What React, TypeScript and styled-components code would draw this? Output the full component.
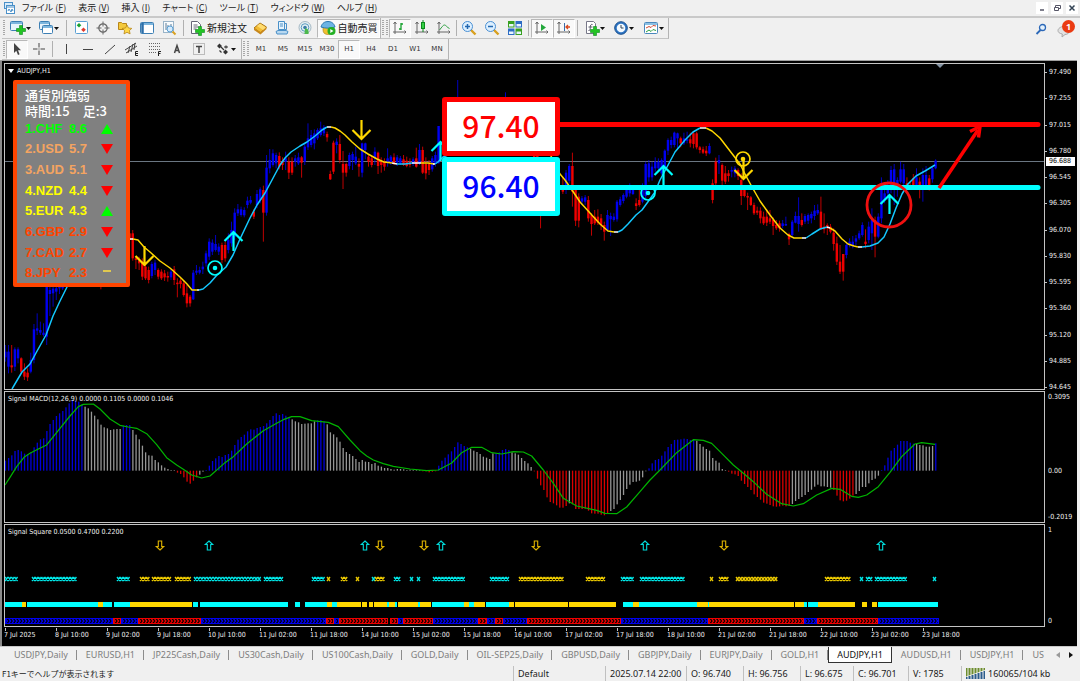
import React from 'react';
import styled, { createGlobalStyle, css } from 'styled-components';

const GlobalStyle = createGlobalStyle`
  *, *::before, *::after { box-sizing: border-box; }
  body { margin: 0; background: #f0f0f0; color: #1a1a1a; font: 9px/12px "Noto Sans", "Noto Sans CJK JP", sans-serif; }
  button { font: inherit; color: inherit; background: none; border: 0; padding: 0; margin: 0; white-space: nowrap; }
  svg { display: block; }
`;

const CYAN = '#00ffff';
const GOLD = '#ffd700';
const CHART_FONT = '"DejaVu Sans Condensed", "DejaVu Sans", sans-serif';

/* ---------- window frame ---------- */

const Window = styled.div`
  display: flex;
  flex-direction: column;
  min-height: 100vh;
  overflow: hidden;
`;

const MenuBar = styled.header`
  display: flex;
  align-items: center;
  height: 18px;
  padding: 0 4px;
  border-bottom: 2px solid #c9c9c9;
`;

const MenuNav = styled.nav`
  display: flex;
  flex: 1;
  gap: 12px;
  padding-left: 6px;
`;

const MenuButton = styled.button`
  height: 16px;
  font-family: "Noto Sans CJK JP", "Noto Sans", sans-serif;
  font-size: 9px;
  line-height: 16px;
  font-feature-settings: "palt";
`;

const WindowButtons = styled.div`
  display: flex;
  gap: 3px;
  margin-right: -2px;
`;

const WindowButton = styled.button`
  display: grid;
  place-items: center;
  width: 12px;
  height: 12px;
  background: #fff;
`;

/* ---------- toolbars ---------- */

const ToolbarRow = styled.div`
  display: flex;
  align-items: stretch;
  height: 21px;
  padding-left: 2px;
  justify-content: space-between;
`;

const Toolbar = styled.div`
  display: flex;
  align-items: center;
  border-right: 1px solid #b4b4b4;
  border-bottom: 1px solid #c4c4c4;
`;

const Group = styled.div`
  display: flex;
`;

const Grip = styled.span`
  width: 2px;
  height: 16px;
  margin: 0 1px 0 1px;
  background: repeating-linear-gradient(#a8a8a8 0 1px, #f0f0f0 1px 2px);
`;

const Divider = styled.span<{ $gap?: number }>`
  width: 1px;
  height: 16px;
  margin: 0 ${(p) => p.$gap ?? 2}px;
  background: #b0b0b0;
`;

const ToolButton = styled.button<{ $pressed?: boolean; $w?: number }>`
  display: flex;
  align-items: center;
  justify-content: center;
  flex: none;
  width: ${(p) => p.$w ?? 22}px;
  height: 19px;
  ${(p) => p.$pressed && css`
    background: #f9f9f9;
    border: 1px solid #fff;
    border-top-color: #b8b8b8;
    border-left-color: #b8b8b8;
  `}
`;

const WideButton = styled(ToolButton)`
  gap: 2px;
  font-family: "Noto Sans CJK JP", sans-serif;
  font-size: 10px;
  line-height: 18px;
`;

const Timeframe = styled(ToolButton)`
  font-family: "DejaVu Sans", sans-serif;
  font-size: 7px;
  color: #333;
`;

const Utilities = styled.div`
  display: flex;
  align-items: center;
  gap: 10px;
  padding-right: 5px;
`;

const ChatButton = styled.button`
  position: relative;
  width: 18px;
  height: 18px;
`;

const Badge = styled.span`
  position: absolute;
  top: 0;
  right: 0;
  width: 13px;
  height: 13px;
  border-radius: 50%;
  background: #ea3a12;
  color: #fff;
  font-size: 9px;
  line-height: 13px;
  font-weight: 700;
  text-align: center;
`;

/* ---------- chart ---------- */

const ChartWindow = styled.main`
  display: flex;
  flex-direction: column;
  flex: 1;
  margin-right: 3px;
  padding: 2px 0 1px 4px;
  background: #000;
  border-top: 1px solid #a0a0a0;
  border-bottom: 1px solid #c8c8c8;
  color: #f0f0f0;
  font: 7px/8px ${CHART_FONT};
  box-shadow: inset 2px 0 0 #8a8a8a;
`;

const PanelRow = styled.section<{ $h: number; $grow?: boolean }>`
  display: flex;
  flex: ${(p) => (p.$grow ? 1 : 0)} 0 ${(p) => p.$h}px;
`;

const Plot = styled.div`
  position: relative;
  flex: 1;
  min-width: 0;
  border: 1px solid #c4c4c4;
  overflow: hidden;
  margin-bottom: 1px;
`;

const Canvas = styled.svg`
  position: absolute;
  inset: 0;
  width: 100%;
  height: 100%;
`;

const PlotTitle = styled.h2`
  position: relative;
  display: flex;
  align-items: center;
  gap: 3px;
  margin: 3px 0 0 3px;
  font: inherit;
  line-height: 8px;
  white-space: pre;
`;

const Axis = styled.div`
  position: relative;
  display: flex;
  flex-direction: column;
  justify-content: space-between;
  width: 32px;
  padding: 5px 0 0 4px;
`;

const ScaleAxis = styled(Axis)`
  padding: 2px 0 3px 3px;
`;

const PriceLabel = styled.span`
  position: relative;
  line-height: 8px;
  &::before {
    content: "";
    position: absolute;
    left: -4px;
    top: 4px;
    width: 2px;
    height: 1px;
    background: #c4c4c4;
  }
`;

const AxisLabel = styled.span<{ $share?: number }>`
  flex: ${(p) => p.$share ?? 0} 0 auto;
  ${(p) => p.$share && css`flex-basis: 0;`}
`;

const CurrentPrice = styled.span`
  position: absolute;
  top: 94px;
  left: 1px;
  width: 29px;
  padding-left: 3px;
  background: #fff;
  color: #000;
  line-height: 9px;
`;

const TimeAxis = styled.div`
  display: flex;
  height: 17px;
  overflow: hidden;
`;

const TimeLabel = styled.span`
  flex: none;
  width: 51px;
  padding-top: 3px;
  white-space: nowrap;
  background: linear-gradient(#c4c4c4, #c4c4c4) 1px 0 / 1px 3px no-repeat;
`;

const Strength = styled.aside`
  position: absolute;
  left: 8px;
  top: 16px;
  width: 117px;
  height: 207px;
  padding: 3px 8px 0;
  border: 4px solid #ff4500;
  border-radius: 2px;
  background: #808080;
  color: #fff;
`;

const StrengthHead = styled.p`
  display: flex;
  gap: 13px;
  margin: 0;
  font: 500 13px/16px "Noto Sans CJK JP", sans-serif;
`;

const StrengthTable = styled.table`
  border-collapse: collapse;
  margin-top: -1px;
  font: 700 13px/21px "Liberation Sans", sans-serif;
  td { padding: 0; height: 20px; line-height: 20px; }
  tr:nth-child(3n) td, tr:nth-child(3n + 1) td { height: 21px; line-height: 21px; }
`;

const StrengthCell = styled.td<{ $ink: string; $w: number }>`
  width: ${(p) => p.$w}px;
  color: ${(p) => p.$ink};
`;

const Level = styled.div<{ $line: string; $ink: string; $top: number }>`
  position: absolute;
  left: 437px;
  top: ${(p) => p.$top}px;
  width: 118px;
  height: 59px;
  border: 5px solid ${(p) => p.$line};
  border-radius: 3px;
  background: #fff;
  color: ${(p) => p.$ink};
  font: 500 30px/46px "Noto Sans CJK JP", sans-serif;
  text-align: center;
`;

/* ---------- tabs and status ---------- */

const TabBar = styled.nav`
  display: flex;
  height: 17px;
  padding-left: 5px;
  color: #7d7d7d;
`;

const TabStrip = styled.div`
  display: flex;
  flex: 1;
  min-width: 0;
  overflow: hidden;
`;

const Tab = styled.button<{ $active?: boolean }>`
  position: relative;
  flex: none;
  height: 16px;
  padding: 0 9px;
  line-height: 14px;
  &::after {
    content: "";
    position: absolute;
    right: 0;
    top: 3px;
    width: 1px;
    height: 10px;
    background: #8c8c8c;
  }
  &:last-child::after { display: none; }
  &:last-child { padding-right: 0; }
  ${(p) => p.$active && css`
    padding: 0 8px;
    color: #111;
    background: #fff;
    border: 1px solid #333;
    border-top: 0;
    &::after { display: none; }
  `}
`;

const TabArrows = styled.div`
  display: flex;
  gap: 9px;
  padding: 0 7px 2px 1px;
  align-items: center;
`;

const StatusBar = styled.footer`
  display: flex;
  align-items: center;
  height: 19px;
  padding-left: 2px;
  font-family: "Noto Sans", "Noto Sans CJK JP", sans-serif;
`;

const StatusHint = styled.span`
  flex: 1;
  white-space: nowrap;
  font-family: "Noto Sans CJK JP", sans-serif;
  font-size: 8px;
`;

const StatusCell = styled.span<{ $w: number }>`
  display: flex;
  align-items: center;
  gap: 3px;
  width: ${(p) => p.$w}px;
  height: 15px;
  padding-left: 4px;
  border-left: 1px solid #c0c0c0;
  white-space: nowrap;
`;

/* ---------- icons ---------- */

const Icon = ({ children, w = 16, h = 16 }: { children: React.ReactNode; w?: number; h?: number }) => (
  <svg width={w} height={h} viewBox={`0 0 ${w} ${h}`} fill="none" aria-hidden="true">{children}</svg>
);

const Caret = () => <Icon w={5} h={3}><path d="M0 0h5L2.500 3z" fill="#111" /></Icon>;
const Plus = ({ x = 6, y = 6 }) => (
  <path transform={`translate(${x} ${y})`} d="M3 0h3v3h3v3H6v3H3V6H0V3h3z" fill="#22c422" stroke="#0a8a1c" strokeWidth=".6" />
);
const Axes = () => <path d="M3 2v12M1 12h13M1.500 4 3 2l1.500 2M12.500 10.500 14 12l-1.500 1.500" stroke="#666" />;

const icons: Record<string, React.ReactNode> = {
  app: <><rect x=".5" y=".5" width="8" height="6" fill="#d9ecfa" stroke="#4a90c8" /><rect x="2.500" y="3.500" width="8" height="8" fill="#fff" stroke="#4a90c8" /><path d="M3 5h7M4 9l1-2 2 3 1-3 1 2" stroke="#4a90c8" /></>,
  newChart: <><rect x=".5" y="1.500" width="12" height="9" rx="1" fill="#e8f4fc" stroke="#3c7fb4" /><path d="M1 3h11" stroke="#7db6de" strokeWidth="2" /><Plus x={6.500} y={5.500} /></>,
  profiles: <><rect x="1.500" y="1.500" width="10" height="8" rx="1" fill="#e8f4fc" stroke="#3c7fb4" /><path d="M2 3h9" stroke="#7db6de" strokeWidth="2" /><rect x="4.500" y="5.500" width="10" height="8" rx="1" fill="#fff" stroke="#3c7fb4" /><path d="M5 7h9" stroke="#7db6de" strokeWidth="2" /></>,
  market: <><rect x="2.500" y="1.500" width="12" height="12" rx="1" fill="#fff" stroke="#5aa0d4" /><path d="m6 3 2.300 2.300L6 7.600 3.700 5.300z" fill="#18a030" /><path d="m10.500 7.500 2.300 2.300-2.300 2.300-2.300-2.300z" fill="#e03a2c" /></>,
  dataWindow: <><circle cx="8" cy="8" r="4.200" stroke="#666" strokeWidth="1.200" /><path d="M8 1.500v5M8 9.500v5M1.500 8h5M9.500 8h5" stroke="#666" /></>,
  navigator: <><path d="M1.500 2.500h3l1 1h4v6h-8z" fill="#f4c93c" stroke="#b88618" /><path d="m10 5 1.500 3 3.300.4-2.400 2.200.7 3.300-3.100-1.600L7 13.900l.6-3.300-2.400-2.200 3.300-.4z" fill="#ffd848" stroke="#b88618" strokeWidth=".8" /></>,
  terminal: <><rect x="1.500" y="2.500" width="13" height="11" rx="1" fill="#fff" stroke="#3c7fb4" /><path d="M2 4h12" stroke="#7db6de" strokeWidth="2" /><path d="M3.500 3v10" stroke="#2d6ea8" strokeWidth="2.500" /></>,
  tester: <><rect x="2.500" y="1.500" width="10" height="11" fill="#f8fbfd" stroke="#9ab4c8" /><path d="M5 3v7M7 5v5M10 4v5" stroke="#5c7c98" /><circle cx="9" cy="9" r="3" fill="#d4eafc" stroke="#5aa0d4" /><path d="m11.500 11.500 3 3" stroke="#d8a020" strokeWidth="2" /></>,
  order: <><path d="M2.500 1.500h6l3 3v9h-9z" fill="#fff" stroke="#667" /><path d="M4.500 5h4M4.500 7h5M4.500 9h3" stroke="#667" /><Plus x={6.500} y={6.500} /></>,
  editor: <><path d="m2 8 6-5 6.500 4-6 6z" fill="#f2bc34" stroke="#a87414" /><path d="m2 8 6.500 4 6-5v2l-6 5.500L2 10z" fill="#c8881c" /><path d="M8 3.500 5 6l6 4 3-2.500z" fill="#ffdc70" /></>,
  metaquotes: <><path d="M4.500 1.500h6v8h-6z" fill="#e6f3fc" stroke="#4a90c8" /><path d="M10.500 3.500h2v6h-2M6 4h3M6 6h3" stroke="#4a90c8" /><path d="m2 11.500 2-1h8l2 1-1 2.500H3z" fill="#b8d8f0" stroke="#4a90c8" /></>,
  signal: <><circle cx="8" cy="7.500" r="6" stroke="#a4b8c4" fill="#e4eef2" /><circle cx="8" cy="7.500" r="3.800" stroke="#5a9cc0" /><circle cx="8" cy="7.500" r="1.800" fill="#3a7ca8" /><path d="M8 8.500c3-.5 4 2 3.500 5.500H7.500z" fill="#4cb84c" /></>,
  auto: <><path d="M3 7h10v3c0 3-2 4.500-5 4.500S3 13 3 10z" fill="#f0c030" stroke="#a88018" strokeWidth=".6" /><path d="M1 7c1-4 4-5.500 7-5.500S14 3 15 7c-4 1.500-10 1.500-14 0z" fill="#6cb4e4" stroke="#2d78b0" /><circle cx="11.500" cy="11" r="4" fill="#24b024" /><path d="m10.300 9 3.200 2-3.200 2z" fill="#fff" /></>,
  bars: <><Axes /><path d="M9 3v7M9 4h2M7 9h2" stroke="#14a02c" strokeWidth="1.300" /></>,
  candles: <><Axes /><path d="M9 0v12" stroke="#0a8a1c" /><rect x="7.500" y="2.500" width="3" height="6" fill="#34d044" stroke="#0a8a1c" /></>,
  line: <><Axes /><path d="M3.500 10C6 7 7 5 8.500 5s2.500 2.500 5 3.500" stroke="#2ca040" /></>,
  zoomIn: <><path d="m9.500 9.500 5 5" stroke="#d8a020" strokeWidth="2.400" /><circle cx="6.500" cy="6.500" r="5" fill="#dcefff" stroke="#4a90d4" /><path d="M4 6.500h5M6.500 4v5" stroke="#2468b0" strokeWidth="1.500" /></>,
  zoomOut: <><path d="m9.500 9.500 5 5" stroke="#d8a020" strokeWidth="2.400" /><circle cx="6.500" cy="6.500" r="5" fill="#dcefff" stroke="#4a90d4" /><path d="M4 6.500h5" stroke="#2468b0" strokeWidth="1.500" /></>,
  tile: <><path d="M1 1h6.500v6.500H1zM8.500 8.500H15V15H8.500z" fill="#38a020" /><path d="M8.500 1H15v6.500H8.500zM1 8.500h6.500V15H1z" fill="#2c6cc4" /><path d="M2 4h4.500v2.500H2zM9.500 4H14v2.500H9.500zM2 11.500h4.500V14H2zM9.500 11.500H14V14H9.500z" fill="#e8f4ff" /></>,
  scroll: <><Axes /><path d="m7 4 5 3.500L7 11z" fill="#24a83c" /></>,
  shift: <><Axes /><path d="M8.500 3v8" stroke="#3a6ca8" /><path d="M14 7H10.500M12 5l-2 2 2 2" stroke="#d84820" strokeWidth="1.300" /></>,
  indicators: <><path d="M2.500 1.500h7l2 2v10h-9z" fill="#fff" stroke="#778" /><path d="M8.500 4.500c-2-.5-2 1-2.200 3-.2 2-.3 3.500-1.800 3M4.500 7h4" stroke="#556" /><Plus x={6.500} y={6.500} /></>,
  clock: <><circle cx="8" cy="8" r="6.300" fill="#2c74c4" stroke="#1c508c" /><circle cx="8" cy="8" r="4.300" fill="#f4faff" /><path d="M8 5v3h2.500" stroke="#345" /></>,
  template: <><rect x="1.500" y="2.500" width="13" height="11" rx="1" fill="#fff" stroke="#4a88bc" /><path d="M2 4h12" stroke="#8cc0e4" strokeWidth="2" /><path d="m3 8 3-1.500 2 1 2-2 3 .5" stroke="#d04830" /><path d="m3 12 3-2 2 1.500 2-2 3 1" stroke="#2ca040" /></>,
  pointer: <path d="M5 2v10l2.300-2.200L9 14l1.600-.8L9 9.300h3z" fill="#444" />,
  cross: <path d="M8 2v4.500M8 9.500V14M2 8h4.500M9.500 8H14M8 7.500v1" stroke="#444" />,
  vline: <path d="M8.500 3v10" stroke="#444" />,
  hline: <path d="M3 8.500h10" stroke="#444" />,
  trend: <path d="M3 13 13 4" stroke="#444" />,
  channel: <><path d="m1 9 11-7M2 12l11-7M4 12l2-7M7 11l2-8M10 9l1-7" stroke="#444" /><path d="M14 10.500h-2.500v4H14M11.500 12.500H14" stroke="#222" /></>,
  fibo: <><path d="M2 2.500h12M2 5.500h12M2 8.500h12M2 11.500h8" stroke="#666" strokeDasharray="1 1" /><path d="M14 10.500h-2.500V15M11.500 12.500h2" stroke="#222" /></>,
  textTool: <path d="M5.500 12 8 4.500l2.500 7.500M6.500 9.500h3" stroke="#444" strokeWidth="1.500" />,
  labelTool: <><rect x="2.500" y="2.500" width="11" height="11" stroke="#888" strokeDasharray="1 1" /><path d="M5 5.500h6M8 5v7" stroke="#444" strokeWidth="1.500" /></>,
  arrows: <><path d="m2 5 2.500-2.500L7 5 4.500 7.500zM8 11l2.500-2.500L13 11l-2.500 2.500z" fill="#333" /><path d="m4.500 9.500 2 2M6 6l3 3M9 6h4M11 4.500v3" stroke="#333" strokeWidth="1.200" /></>,
};

const Tool = ({ name, label, pressed, caret, w }: { name: string; label: string; pressed?: boolean; caret?: boolean; w?: number }) => (
  <ToolButton type="button" aria-label={label} $pressed={pressed} $w={w ?? (caret ? 30 : 22)}>
    <Icon>{icons[name]}</Icon>{caret && <Caret />}
  </ToolButton>
);

/* ---------- chart data: positions are in thirds of a pixel ---------- */

const PITCH = 3.186;
const barX = (i: number) => 5.300 + i * PITCH;

type Segment = { start: number; y: number; bars: string };
/* each bar: direction, high, low, body top, body bottom */
const segments: Segment[] = [
  { start: 0, y: 70, bars: 'b825,875,845,862 b825,910,845,890 r825,908,886,892 b832,903,838,890 b832,880,838,865 r862,910,865,905 r880,930,905,920 r895,933,908,922 b848,910,870,905 b762,880,778,870 b730,795,775,782 b755,795,780,788 b760,800,788,795 b640,825,650,800 b650,738,660,672 b645,710,656,670 b640,690,655,665 b640,672,645,655 b640,660,640,655' },
  { start: 30, y: 70, bars: 'r630,658,630,640' },
  { start: 39, y: 70, bars: 'r475,520,490,510 r480,572,490,565 r560,597,565,570 r560,600,572,580 r565,630,575,620 r575,630,590,625 r590,640,600,630 b575,625,582,618 b570,615,578,600 r595,628,600,620 r598,630,605,625 r600,633,610,622 r605,635,618,622 b597,630,605,622 r588,645,598,630 r625,682,638,642 r625,655,632,642 r630,680,640,675 r645,712,670,700 r675,710,680,700 b600,690,608,688 b585,615,602,608 b590,613,600,608 b575,612,590,598 b542,590,550,580 b505,570,515,560 b508,555,518,545 b495,545,522,540 b520,555,530,545 r518,580,525,570 r515,575,525,565 b490,550,510,540 b455,530,480,520 b415,510,428,500 b402,438,418,430 b410,440,418,435 b412,442,420,436 b380,415,392,405 b378,403,390,398 r418,447,425,440 b360,415,372,405 b352,400,358,390 r347,515,360,428 b255,437,293,428 b237,310,270,295 b238,290,250,285 b248,295,255,280 r247,298,258,290' },
  { start: 87, y: 70, bars: 'r262,300,275,285 b245,300,265,275 r262,327,275,308 r262,315,275,308 b255,290,265,275 b248,285,262,280 r258,323,262,278 b220,285,230,275 b160,240,205,232 b180,232,195,225 b178,238,190,220 b175,210,180,205 b155,200,175,195 b165,198,172,190 r185,215,192,202 r302,330,312,328 r212,312,218,305 b205,250,215,225 r195,280,222,270 r243,357,282,308 r278,320,282,308 b248,298,255,288 b245,300,252,270 b230,285,260,280 r265,320,282,290 b218,322,220,308 b218,268,220,240 r255,290,260,275 r258,292,265,285 b232,285,245,265 r245,312,248,288 r262,308,275,285 r265,302,275,290 b235,290,265,275 b255,285,260,278 r250,285,262,280 b255,288,262,278 b258,285,265,280 r255,288,268,285 r260,292,272,288 r265,292,275,285 b262,288,268,282 r233,293,265,290 b222,285,240,280 r230,312,240,308 r262,328,282,310 r270,315,282,300 b258,305,265,298 b245,290,255,282 b168,280,168,280' },
  { start: 142, y: 70, bars: 'b30,120,100,120' },
  { start: 157, y: 70, bars: 'b67,120,100,120' },
  { start: 166, y: 70, bars: 'r240,270,255,265 r250,275,255,270 r300,475,300,400' },
  { start: 175, y: 90, bars: 'r260,312,290,305 b240,312,248,300 b222,280,228,272 r188,350,228,305 r290,408,300,392 r310,412,320,392 b318,345,325,335 b315,345,322,335 r318,395,330,385 r370,437,375,402 r360,405,380,400 r358,405,380,398 r372,420,385,405 r395,452,405,425 b360,425,375,420 b368,438,378,388 b370,395,380,390 b330,395,335,388 b320,350,328,345 b310,340,315,333 b285,325,298,320 b280,320,295,310 b290,315,300,312 r325,360,340,348 r300,350,330,345 b280,340,290,335 b215,325,222,318 b210,275,220,262 b215,272,230,262 b202,245,215,235 b205,245,215,235 b205,255,210,250 b178,235,182,230 b145,195,150,182 b140,175,150,165 b125,172,128,165 b128,178,130,145 r140,172,145,160 b128,165,145,160 b125,160,148,152 r128,172,148,160 r125,175,130,162 r125,178,130,172 r168,190,172,180 r170,192,178,188 r168,198,182,190 b160,193,168,190 r268,340,280,330 r203,285,215,280 b195,252,210,220 r220,290,225,272 r228,282,250,275 r240,275,250,258 b230,262,240,245 b228,262,235,250 r235,270,240,258 r250,345,270,318 r285,322,300,318 r308,360,318,322 r318,348,322,345 r338,375,345,370 r350,375,362,368 r352,400,362,385 r365,405,380,400 r358,408,380,398 r360,402,385,395 r382,435,390,408 r390,420,405,415 r392,425,400,415 b390,415,400,408 b380,408,402,406 r428,465,432,448 b390,438,395,435 b365,400,378,398 b322,425,378,402 r370,410,390,405 b372,402,378,395 b370,402,375,392 b365,400,372,385 b345,390,362,378 b343,375,360,370 r320,420,365,415 r370,430,410,418 r400,435,405,415 r402,430,410,425 r415,482,428,462 r440,525,460,515 r465,552,515,545' },
  { start: 263, y: 90, bars: 'r492,572,492,545 b455,505,465,495 b445,472,455,465 b438,475,455,468 b435,465,445,455 b422,450,430,445 b397,440,405,435 r418,475,455,462 b395,460,410,450 b355,480,390,430 r380,502,390,440 b370,445,380,440 b262,400,300,385 b290,340,310,330 b270,330,295,310 b228,310,240,300 b222,345,238,290 b262,320,270,290 b215,280,238,275 b222,290,238,280 r262,300,280,290 r275,300,285,292 r252,300,265,290 b235,295,262,288 r262,325,275,295 b235,335,255,290 b228,295,255,285 r255,302,265,298 b228,278,235,268 b208,238,212,235' },
];

const maLines: [string, string][] = [
  [CYAN, '12,389 22,372 30,364 36,353 46,335 53,316 60,301 67,287 80,262 100,242 129,239'],
  [GOLD, '133,239 138,240 144,247 150,252 160,261 170,268 180,277 187,284 192,290 197,290'],
  [CYAN, '199,290 203,289 210,283 217,275 226,267 233,255 240,239 250,218 257,205 265,193 272,180 280,165 285,158 291,152 300,146 307,142 315,136 322,130 327,127'],
  [GOLD, '331,127 335,128 340,131 345,135 352,142 360,149 368,154 377,159 384,162 392,163'],
  [CYAN, '397,164 405,164 412,163'],
  [GOLD, '421,163 428,163 434,164'],
  [CYAN, '435,164 438,162 443,157 460,150'],
  [GOLD, '545,150 551,156 560,174 565,180 572,190 580,202 590,213 600,224 608,231 614,232'],
  [CYAN, '618,232 622,230 628,224 636,215 642,210 650,199 655,192 660,180 667,167 675,152 685,140 693,132 700,128'],
  [GOLD, '706,128 712,131 720,138 730,151 740,164 746,176 752,187 760,201 770,215 780,228 788,235 794,238 802,238'],
  [CYAN, '806,238 812,234 820,229 827,227'],
  [GOLD, '830,228 835,231 842,239 848,244 854,246 858,247'],
  [CYAN, '862,247 870,246 878,243 884,237 890,224 896,208 902,194 908,184 916,176 925,171 935,165'],
];
const maJoints = '129,239 133,239 M197,290 199,290 M327,127 331,127 M392,163 397,164 M412,163 421,163 M433,164 435,164 M614,232 618,232 M700,128 706,128 M802,238 806,238 M827,227 830,228 M858,247 862,247';

const MACD_ZERO = 242;
const macd = [
  212, 204, 196, 183, 180, 184, 191, 192, 187, 172, 158, 148, 145, 123, 102, 90, 78, 70, 63, 52, 40, 30, 32, 35, 44, 50, 55, 65, 77, 88, 104, 112, 115, 120, 118, 117, 117, 107, 105, 105,
  120, 134, 148, 167, 187, 196, 197, 210, 217, 226, 233, 237, 240, 241, 248, 252, 262, 275, 281, 272, 262, 254, 245, 240, 227, 213, 205, 198, 201, 195, 192, 182, 165, 149, 141, 134, 124, 118, 119, 114,
  111, 108, 100, 90, 78, 70, 75, 72, 77, 82, 88, 94, 97, 102, 101, 100, 100, 94, 91, 90, 94, 103, 127, 133, 142, 155, 174, 186, 192, 198, 207, 216, 210, 215, 216, 222, 219, 227, 230, 234,
  234, 237, 239, 237, 237, 238, 240, 239, 240, 241, 241, 243, 243, 247, 245, 242, 227, 212, 203, 193, 184, 171, 157, 162, 168, 172, 176, 182, 186, 192, 200, 203, 207, 190, 190, 187, 180, 177, 180, 187,
  190, 194, 204, 213, 220, 231, 244, 266, 286, 300, 322, 336, 340, 346, 353, 353, 348, 340, 343, 357, 357, 357, 356, 362, 370, 371, 371, 374, 376, 372, 363, 357, 343, 330, 315, 297, 284, 276, 275, 272,
  262, 242, 235, 220, 210, 207, 197, 184, 171, 162, 150, 149, 148, 146, 147, 150, 148, 152, 162, 170, 177, 182, 204, 212, 218, 237, 241, 245, 251, 253, 258, 272, 282, 291, 300, 313, 321, 329, 338, 341,
  345, 349, 350, 349, 347, 349, 348, 342, 333, 327, 321, 315, 306, 299, 290, 284, 289, 289, 291, 293, 300, 317, 331, 334, 332, 326, 317, 312, 303, 291, 291, 280, 270, 266, 257, 240, 226, 203, 182, 174,
  164, 153, 153, 153, 158, 161, 162, 165, 166, 170, 170, 168, 160,
];
const macdSpans: [number, string][] = [
  [25, 'b'], [37, 'g'], [40, 'b'], [54, 'g'], [61, 'r'], [63, 'g'], [90, 'b'], [98, 'g'], [101, 'b'], [131, 'g'], [136, 'r'], [146, 'b'], [154, 'g'], [159, 'b'],
  [166, 'g'], [177, 'r'], [178, 'g'], [190, 'r'], [202, 'g'], [217, 'b'], [227, 'g'], [247, 'r'], [260, 'g'], [267, 'r'], [275, 'g'], [286, 'b'], [292, 'g'], [999, 'b'],
];
const macdInk: Record<string, string> = { b: '#0000d8', g: '#969696', r: '#dc0000' };
const macdColor = (i: number) => macdInk[macdSpans.find(([end]) => i < end)![1]];

const macdSignal = '15,285 30,262 50,230 72,202 90,190 115,177 140,165 160,140 180,115 210,78 235,50 250,43 280,42 300,57 330,87 360,106 385,111 410,115 440,131 470,164 500,203 530,225 550,238 575,255 605,264 630,258 655,236 675,218 700,200 740,162 790,122 830,100 850,89 875,80 900,80 935,92 985,97 1015,110 1050,150 1080,182 1100,198 1120,210 1150,221 1180,229 1230,237 1280,242 1315,240 1355,219 1385,188 1415,172 1445,172 1475,188 1505,192 1540,185 1570,186 1595,198 1630,240 1660,280 1690,325 1730,348 1790,361 1815,370 1850,371 1880,351 1920,305 1950,270 1980,240 2030,188 2080,149 2110,151 2135,160 2160,185 2200,225 2230,250 2260,275 2300,313 2345,341 2380,348 2410,341 2450,315 2495,295 2520,298 2555,319 2575,322 2600,315 2635,290 2670,247 2705,200 2745,162 2765,158 2805,163';

type Run = [number, number, 'c' | 'y' | 'b' | 'r'];
const crossRuns: Run[] = [
  [5, 19, 'c'], [32, 76, 'c'], [117, 130, 'c'], [140, 150, 'y'], [152, 171, 'y'], [175, 191, 'y'], [194, 261, 'c'], [264, 283, 'c'], [312, 325, 'c'], [327, 331, 'y'], [341, 347, 'y'],
  [356, 360, 'y'], [372, 375, 'c'], [375, 385, 'y'], [394, 401, 'c'], [410, 414, 'c'], [417, 420, 'c'], [433, 465, 'c'], [490, 510, 'c'], [519, 564, 'y'], [586, 605, 'y'], [621, 634, 'c'],
  [640, 685, 'c'], [710, 713, 'y'], [719, 729, 'y'], [736, 777, 'y'], [825, 851, 'y'], [860, 863, 'c'], [866, 873, 'c'], [875, 908, 'c'], [933, 936, 'c'],
];
const bandRuns: Run[] = [
  [5, 22, 'c'], [22, 26, 'y'], [27, 98, 'c'], [98, 103, 'y'], [103, 112, 'c'], [114, 130, 'c'], [130, 192, 'y'], [193, 198, 'c'], [200, 288, 'c'], [295, 300, 'c'], [305, 327, 'c'], [327, 332, 'y'],
  [332, 337, 'c'], [337, 361, 'y'], [362, 367, 'y'], [369, 373, 'y'], [374, 387, 'y'], [387, 389, 'c'], [389, 395, 'y'], [395, 397, 'c'], [398, 418, 'y'], [418, 420, 'c'], [420, 431, 'y'],
  [432, 464, 'c'], [464, 469, 'y'], [469, 474, 'c'], [474, 485, 'y'], [486, 509, 'c'], [509, 514, 'y'], [515, 568, 'y'], [569, 616, 'y'], [623, 633, 'c'], [633, 639, 'y'], [639, 697, 'c'],
  [697, 708, 'y'], [708, 709, 'c'], [709, 794, 'y'], [795, 804, 'y'], [804, 807, 'c'], [808, 818, 'c'], [818, 855, 'y'], [862, 867, 'y'], [872, 877, 'y'], [878, 938, 'c'],
];
const squareRuns: Run[] = [
  [5, 113, 'b'], [113, 121, 'r'], [121, 138, 'b'], [138, 201, 'r'], [201, 326, 'b'], [326, 334, 'r'], [334, 339, 'b'], [339, 388, 'r'], [390, 398, 'r'], [398, 403, 'b'], [403, 433, 'r'],
  [433, 478, 'b'], [478, 487, 'r'], [487, 495, 'b'], [495, 503, 'r'], [503, 527, 'b'], [527, 621, 'r'], [621, 708, 'b'], [708, 804, 'r'], [804, 817, 'b'], [817, 878, 'r'], [878, 939, 'b'],
];
const runInk = { c: CYAN, y: GOLD, b: '#0000f0', r: '#f00000' };
const signalArrows: [number, 1 | -1][] = [[160, -1], [209, 1], [365, 1], [380, -1], [424, -1], [441, 1], [536, -1], [645, 1], [724, -1], [881, 1]];
const tradeArrows: [number, number, 1 | -1][] = [[144, 256, -1], [233, 241, 1], [361, 130, -1], [440, 151, 1], [663, 175, 1], [743, 170, -1], [889, 204, 1]];
const rings: [number, number, string][] = [[215, 268, CYAN], [648, 193, CYAN], [743, 159, GOLD]];

const PriceCanvas = () => (
  <Canvas role="img" aria-label="AUDJPY H1 candlestick chart">
    <g transform="translate(-5 -64)">
      <path d="M5 161.500H2000" stroke="#6a7682" />
      {segments.flatMap((s) => s.bars.split(' ').map((bar, k) => {
        const [hi, lo, top, bottom] = bar.slice(1).split(',').map((v) => s.y + Number(v) / 3);
        const x = barX(s.start + k);
        const ink = bar[0] === 'b' ? '#0000f0' : '#f00000';
        return (
          <g key={`${s.start}-${k}`}>
            <path d={`M${x} ${hi}V${lo}`} stroke={ink} strokeWidth=".8" />
            <rect x={x - 1.200} y={top} width="2.400" height={Math.max(1.500, bottom - top)} fill={ink} />
          </g>
        );
      }))}
      <g fill="none" strokeWidth="1.500" strokeLinejoin="round">
        {maLines.map(([ink, pts]) => <polyline key={pts} points={pts} stroke={ink === CYAN ? '#14c8ff' : ink} />)}
        <path d={`M${maJoints}`} stroke="#fff" />
      </g>
      {tradeArrows.map(([x, y, dir]) => (
        <path key={x} transform={`translate(${x}.500 ${y}) scale(1 ${dir})`} d="M0 10V-8M-9 0 0-9 9 0" fill="none" stroke={dir > 0 ? CYAN : GOLD} strokeWidth="2.200" />
      ))}
      {rings.map(([x, y, ink]) => (
        <g key={x}><circle cx={x} cy={y} r="7" fill="none" stroke={ink} strokeWidth="1.700" /><circle cx={x} cy={y} r="2.300" fill={ink} /></g>
      ))}
      <g strokeWidth="5" strokeLinecap="round">
        <path d="M556 124.500H1038" stroke="#ff0000" />
        <path d="M556 187.500H1038" stroke={CYAN} />
      </g>
      <g fill="none" stroke="#ff0000" strokeWidth="3.500">
        <path d="m939 188 39-58" />
        <path d="M970 131.500 980 126.500l-1.500 11" />
        <circle cx="889" cy="205" r="22" stroke="#f01010" strokeWidth="2.800" />
      </g>
      <path d="M936 64h8l-4 4z" fill="#8494a4" />
    </g>
  </Canvas>
);

const MacdCanvas = () => (
  <Canvas role="img" aria-label="Signal MACD histogram">
    <g transform="translate(-5 -2)">
      {macd.map((v, i) => (
        <rect key={i} x={barX(i) - 0.500} y={Math.min(v, MACD_ZERO) / 3} width="1.300" height={Math.max(0.600, Math.abs(v - MACD_ZERO) / 3)} fill={macdColor(i)} />
      ))}
      <polyline transform="scale(.33333)" points={macdSignal} fill="none" stroke="#00b400" strokeWidth="3.600" strokeLinejoin="round" />
    </g>
  </Canvas>
);

const steps = ([from, to]: Run) => {
  const n = Math.max(1, Math.round((to - from) / PITCH));
  return Array.from({ length: n }, (_, k) => from + 1.500 + k * PITCH);
};

const SquareCanvas = () => (
  <Canvas role="img" aria-label="Signal Square bands">
    <g transform="translate(-5 -525)">
      {signalArrows.map(([x, dir]) => (
        <path key={x} transform={`translate(${x} 545.500) scale(1 ${dir})`} d="M0-4.500 3.700-1H1.700V4.500H-1.700V-1H-3.700z" fill="none" stroke={dir > 0 ? '#00dcdc' : '#e0b400'} strokeWidth="1.100" />
      ))}
      {crossRuns.map((run) => (
        <path key={run[0]} d={steps(run).map((x) => `M${x - 1.500} 577l3 4m0-4l-3 4`).join('')} stroke={run[2] === 'c' ? '#00e8e8' : '#ecca00'} strokeWidth="1.300" fill="none" />
      ))}
      {bandRuns.map(([from, to, ink]) => <rect key={from} x={from} y="602" width={to - from} height="5" fill={runInk[ink]} />)}
      {squareRuns.map((run) => (
        <g key={run[0]} stroke={runInk[run[2]]} fill="none">
          <path d={`M${run[0]} 618.500H${run[1]}M${run[0]} 623.500H${run[1]}M${run[0] + 0.500} 618v6M${run[1] - 0.500} 618v6`} strokeWidth="1" />
          <path d={steps(run).map((x) => `M${x - 0.800} 619l1.800 2l-1.800 2`).join('')} strokeWidth="1.300" />
        </g>
      ))}
    </g>
  </Canvas>
);

/* ---------- content ---------- */

const menus: [string, string][] = [['ファイル', 'F'], ['表示', 'V'], ['挿入', 'I'], ['チャート', 'C'], ['ツール', 'T'], ['ウィンドウ', 'W'], ['ヘルプ', 'H']];
const prices = ['97.490', '97.255', '97.015', '96.780', '96.545', '96.305', '96.070', '95.830', '95.595', '95.360', '95.120', '94.885', '94.645'];
const times = ['7 Jul 2025', '8 Jul 10:00', '9 Jul 02:00', '9 Jul 18:00', '10 Jul 10:00', '11 Jul 02:00', '11 Jul 18:00', '14 Jul 10:00', '15 Jul 02:00', '15 Jul 18:00', '16 Jul 10:00', '17 Jul 02:00', '17 Jul 18:00', '18 Jul 10:00', '21 Jul 02:00', '21 Jul 18:00', '22 Jul 10:00', '23 Jul 02:00', '23 Jul 18:00'];
const tabs = ['USDJPY,Daily', 'EURUSD,H1', 'JP225Cash,Daily', 'US30Cash,Daily', 'US100Cash,Daily', 'GOLD,Daily', 'OIL-SEP25,Daily', 'GBPUSD,Daily', 'GBPJPY,Daily', 'EURJPY,Daily', 'GOLD,H1', 'AUDJPY,H1', 'AUDUSD,H1', 'USDJPY,H1', 'US'];
const frames = ['M1', 'M5', 'M15', 'M30', 'H1', 'H4', 'D1', 'W1', 'MN'];
const strength: [string, string, string, 'up' | 'down' | 'flat'][] = [
  ['1.CHF', '8.6', '#00ff00', 'up'], ['2.USD', '5.7', '#f4a460', 'down'], ['3.AUD', '5.1', '#f4a460', 'down'], ['4.NZD', '4.4', '#ffff00', 'down'],
  ['5.EUR', '4.3', '#ffff00', 'up'], ['6.GBP', '2.9', '#ff4500', 'down'], ['7.CAD', '2.7', '#ff4500', 'down'], ['8.JPY', '2.3', '#ff4500', 'flat'],
];

const Trend = ({ dir }: { dir: 'up' | 'down' | 'flat' }) => (
  <Icon w={12} h={10}>
    {dir === 'up' && <path d="M6 0 12 10H0z" fill="#00ff00" />}
    {dir === 'down' && <path d="M0 0h12L6 10z" fill="#ff0000" />}
    {dir === 'flat' && <path d="M2 2h8v2H2z" fill="#e0c850" />}
  </Icon>
);

export default function App() {
  return (
    <Window>
      <GlobalStyle />
      <MenuBar>
        <Icon w={12} h={12}>{icons.app}</Icon>
        <MenuNav>
          {menus.map(([name, key]) => <MenuButton type="button" key={key}>{name} (<u>{key}</u>)</MenuButton>)}
        </MenuNav>
        <WindowButtons>
          <WindowButton type="button" aria-label="Minimize"><Icon w={8} h={8}><path d="M2 6h4" stroke="#556" strokeWidth="1.500" /></Icon></WindowButton>
          <WindowButton type="button" aria-label="Restore"><Icon w={8} h={8}><path d="M2.500 3V1.500h5v3H6M1.500 3.500h4v3h-4z" stroke="#556" /></Icon></WindowButton>
          <WindowButton type="button" aria-label="Close"><Icon w={8} h={8}><path d="m1.500 1.500 5 5m0-5-5 5" stroke="#345" strokeWidth="1.500" /></Icon></WindowButton>
        </WindowButtons>
      </MenuBar>

      <ToolbarRow>
        <Group>
          <Toolbar>
            <Grip />
            <Tool name="newChart" label="New chart" caret w={28} />
            <Tool name="profiles" label="Profiles" caret w={29} />
            <Divider $gap={3} />
            <Tool name="market" label="Market watch" />
            <Tool name="dataWindow" label="Data window" />
            <Tool name="navigator" label="Navigator" />
            <Tool name="terminal" label="Terminal" />
            <Tool name="tester" label="Strategy tester" />
            <Divider $gap={3} />
            <WideButton type="button" $w={62}><Icon>{icons.order}</Icon>新規注文</WideButton>
            <Tool name="editor" label="Editor" />
            <Tool name="metaquotes" label="Options" />
            <Tool name="signal" label="Signals" w={24} />
            <WideButton type="button" $w={63} $pressed><Icon>{icons.auto}</Icon>自動売買</WideButton>
          </Toolbar>
          <Toolbar>
            <Grip /><Grip />
            <Tool name="bars" label="Bar chart" pressed />
            <Tool name="candles" label="Candlesticks" />
            <Tool name="line" label="Line chart" />
            <Divider $gap={1} />
            <Tool name="zoomIn" label="Zoom in" />
            <Tool name="zoomOut" label="Zoom out" w={23} />
            <Tool name="tile" label="Tile windows" w={23} />
            <Divider />
            <Tool name="scroll" label="Auto scroll" pressed />
            <Tool name="shift" label="Chart shift" pressed />
            <Divider />
            <Tool name="indicators" label="Indicators" caret w={28} />
            <Tool name="clock" label="Periods" caret w={30} />
            <Tool name="template" label="Templates" caret w={30} />
          </Toolbar>
        </Group>
        <Utilities>
          <ToolButton type="button" aria-label="Search" $w={12}>
            <Icon w={12} h={12}><circle cx="7.500" cy="4.500" r="3" fill="#e4f1fc" stroke="#2c68b8" strokeWidth="1.300" /><path d="M5.500 7 1.500 11" stroke="#2c68b8" strokeWidth="1.800" /></Icon>
          </ToolButton>
          <ChatButton type="button" aria-label="Messages">
            <Icon w={14} h={18}><path d="M7 6.500c3 0 5.500 1.500 5.500 4s-2 4-4.500 4L5 17l.3-3C2.500 13.500 1 12.300 1 10.500s2.500-4 6-4z" fill="#e2e2e2" stroke="#aaa" /></Icon>
            <Badge>1</Badge>
          </ChatButton>
        </Utilities>
      </ToolbarRow>

      <ToolbarRow>
        <Group>
          <Toolbar>
            <Grip />
            <Tool name="pointer" label="Cursor" pressed />
            <Tool name="cross" label="Crosshair" />
            <Divider />
            <Tool name="vline" label="Vertical line" />
            <Tool name="hline" label="Horizontal line" />
            <Tool name="trend" label="Trendline" />
            <Tool name="channel" label="Channel" />
            <Tool name="fibo" label="Fibonacci" w={23} />
            <Tool name="textTool" label="Text" />
            <Tool name="labelTool" label="Text label" />
            <Tool name="arrows" label="Arrows" caret w={31} />
          </Toolbar>
          <Toolbar>
            <Grip /><Grip />
            {frames.map((f) => <Timeframe type="button" key={f} $pressed={f === 'H1'}>{f}</Timeframe>)}
          </Toolbar>
        </Group>
      </ToolbarRow>

      <ChartWindow>
        <PanelRow $h={328} $grow>
          <Plot>
            <PriceCanvas />
            <PlotTitle><Icon w={6} h={4}><path d="M0 0h6L3 4z" fill="#fff" /></Icon>AUDJPY,H1</PlotTitle>
            <Strength>
              <StrengthHead>通貨別強弱</StrengthHead>
              <StrengthHead><span>時間:15</span><span>足:3</span></StrengthHead>
              <StrengthTable>
                <tbody>
                  {strength.map(([name, value, ink, dir]) => (
                    <tr key={name}>
                      <StrengthCell $ink={ink} $w={44}>{name}</StrengthCell>
                      <StrengthCell $ink={ink} $w={32}>{value}</StrengthCell>
                      <td><Trend dir={dir} /></td>
                    </tr>
                  ))}
                </tbody>
              </StrengthTable>
            </Strength>
            <Level $line="#ff0000" $ink="#ff0000" $top={33}>97.40</Level>
            <Level $line={CYAN} $ink="#0000ff" $top={93}>96.40</Level>
          </Plot>
          <Axis>
            {prices.map((p) => <PriceLabel key={p}>{p}</PriceLabel>)}
            <CurrentPrice>96.688</CurrentPrice>
          </Axis>
        </PanelRow>
        <PanelRow $h={133}>
          <Plot>
            <MacdCanvas />
            <PlotTitle>Signal MACD(12,26,9) 0.0000 0.1105 0.0000 0.1046</PlotTitle>
          </Plot>
          <ScaleAxis><AxisLabel $share={74}>0.3095</AxisLabel><AxisLabel $share={46}>0.00</AxisLabel><AxisLabel>-0.2019</AxisLabel></ScaleAxis>
        </PanelRow>
        <PanelRow $h={104}>
          <Plot>
            <SquareCanvas />
            <PlotTitle>Signal Square 0.0500 0.4700 0.2200</PlotTitle>
          </Plot>
          <ScaleAxis><AxisLabel>1</AxisLabel><AxisLabel>0</AxisLabel></ScaleAxis>
        </PanelRow>
        <TimeAxis>{times.map((t) => <TimeLabel key={t}>{t}</TimeLabel>)}</TimeAxis>
      </ChartWindow>

      <TabBar>
        <TabStrip>{tabs.map((t) => <Tab type="button" key={t} $active={t === 'AUDJPY,H1'}>{t}</Tab>)}</TabStrip>
        <TabArrows>
          <button type="button" aria-label="Scroll left"><Icon w={4} h={6}><path d="M4 0v6L0 3z" fill="#999" /></Icon></button>
          <button type="button" aria-label="Scroll right"><Icon w={4} h={6}><path d="M0 0v6l4-3z" fill="#111" /></Icon></button>
        </TabArrows>
      </TabBar>

      <StatusBar>
        <StatusHint>F1キーでヘルプが表示されます</StatusHint>
        <StatusCell $w={92}>Default</StatusCell>
        <StatusCell $w={81}>2025.07.14 22:00</StatusCell>
        <StatusCell $w={57}>O: 96.740</StatusCell>
        <StatusCell $w={57}>H: 96.756</StatusCell>
        <StatusCell $w={53}>L: 96.675</StatusCell>
        <StatusCell $w={55}>C: 96.701</StatusCell>
        <StatusCell $w={53}>V: 1785</StatusCell>
        <StatusCell $w={119}>
          <Icon w={19} h={11}>
            <path d="M.500 0v11M3.500 0v11M6.500 0v11M9.500 0v11M12.500 0v11M15.500 0v11M18.500 0v11" stroke="#6c8c2c" strokeWidth="2" />
            <path d="M0 8.500 19 2v9H0z" fill="#f0f0f0" />
            <path d="M.500 9v2M3.500 8v3M6.500 7v4M9.500 6v5M12.500 5v6M15.500 4v7M18.500 3v8" stroke="#2c5c8c" strokeWidth="2" />
          </Icon>
          160065/104 kb
        </StatusCell>
      </StatusBar>
    </Window>
  );
}
